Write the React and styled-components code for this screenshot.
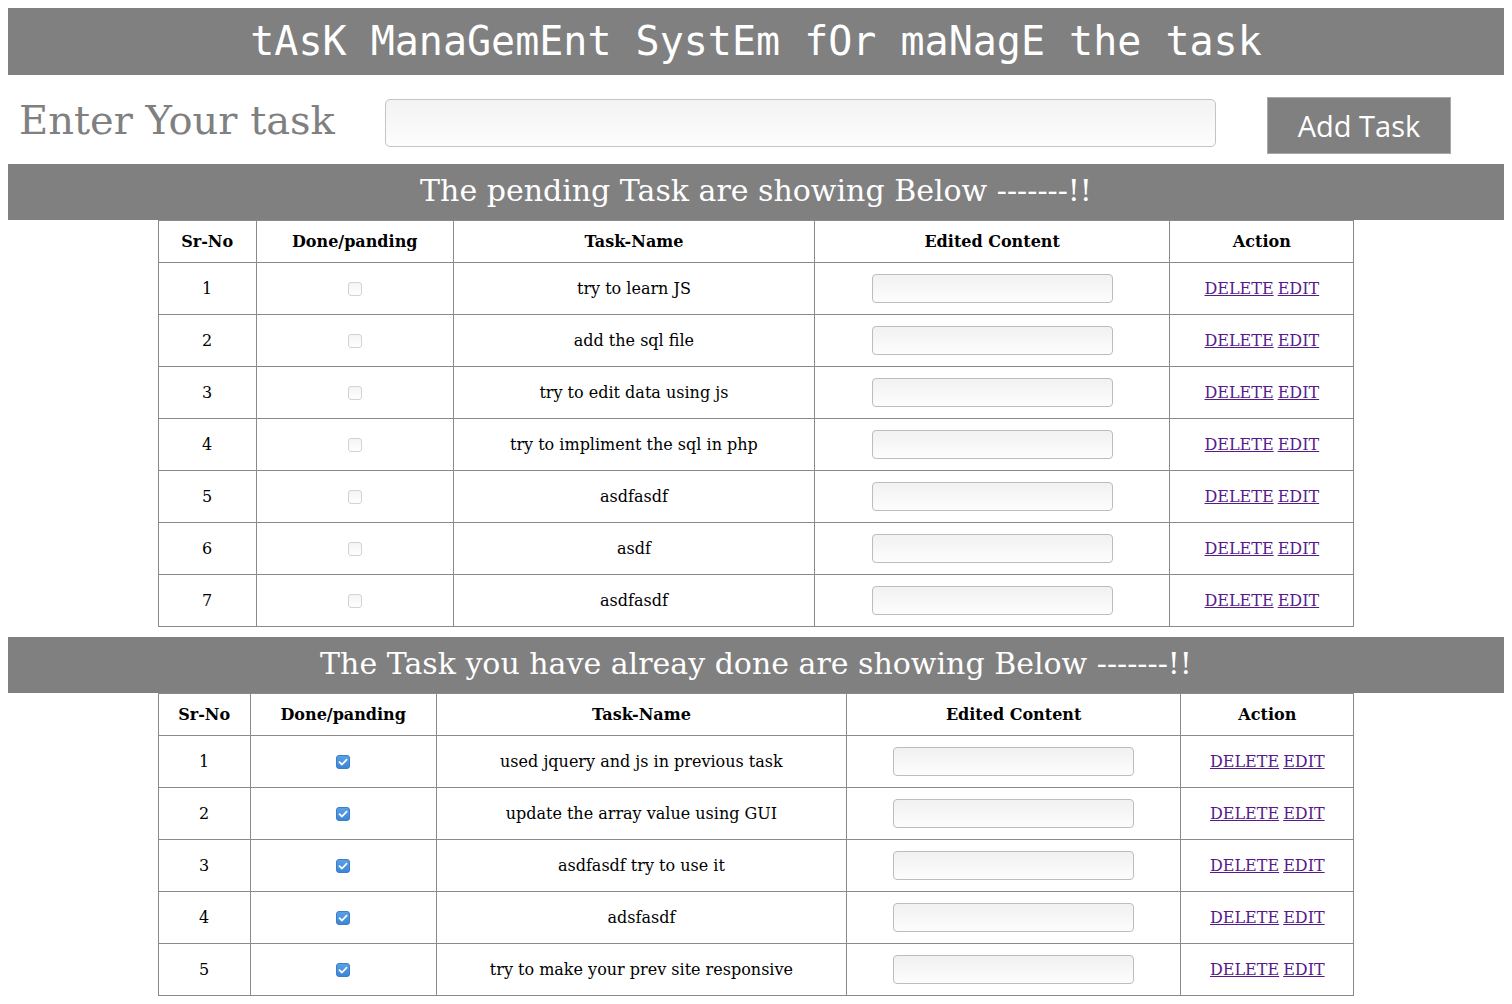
import React from "react";
import styled, { createGlobalStyle } from "styled-components";

const GlobalStyle = createGlobalStyle`
  body {
    margin: 8px;
    font-family: "DejaVu Serif", serif;
    background: #ffffff;
    color: #000;
  }
`;

const Banner = styled.h1`
  margin: 0;
  height: 67px;
  line-height: 67px;
  background: #808080;
  color: #ffffff;
  text-align: center;
  font-family: "DejaVu Sans Mono", monospace;
  font-size: 40px;
  font-weight: normal;
`;

const EntryRow = styled.div`
  display: flex;
  align-items: center;
  height: 89px;
  padding-left: 11px;
`;

const EntryLabel = styled.span`
  width: 366px;
  flex: none;
  font-size: 40px;
  color: #808080;
  margin-top: 1px;
`;

const EntryInput = styled.input`
  box-sizing: border-box;
  width: 831px;
  height: 48px;
  margin-top: 6px;
  border: 1px solid #c4c4c4;
  border-radius: 5px;
  background: linear-gradient(#f3f3f3, #fdfdfd);
  flex: none;
`;

const AddButton = styled.button`
  box-sizing: border-box;
  margin-left: 51px;
  margin-top: 12px;
  width: 184px;
  height: 57px;
  background: #808080;
  border: 1px solid #a8a8a8;
  color: #ffffff;
  font-family: "Open Sans", sans-serif;
  font-size: 29px;
  padding: 0;
`;

const SectionTitle = styled.h2`
  margin: ${(p) => p.$top}px 0 0;
  height: 56px;
  line-height: 54px;
  background: #808080;
  color: #ffffff;
  text-align: center;
  font-size: 30px;
  font-weight: normal;
`;

const Table = styled.table`
  width: 80%;
  margin: 0 auto;
  border-collapse: collapse;
  table-layout: fixed;
  border: 1px solid #8a8a8a;
  font-size: 16px;
`;

const Col = styled.col`
  width: ${(p) => p.$w}px;
`;

const Th = styled.th`
  border: 1px solid #8a8a8a;
  height: 41px;
  padding: 0;
  font-weight: bold;
  text-align: center;
`;

const Td = styled.td`
  border: 1px solid #8a8a8a;
  height: 51px;
  padding: 0;
  text-align: center;
  vertical-align: middle;
`;

const Check = styled.span`
  display: inline-block;
  box-sizing: border-box;
  width: 14px;
  height: 14px;
  border-radius: 3px;
  vertical-align: middle;
  border: 1px solid ${(p) => (p.$on ? "#3a7fc8" : "#d2d2d2")};
  background: ${(p) =>
    p.$on ? "linear-gradient(#5a9fe6, #3d86d6)" : "linear-gradient(#f4f4f4, #ffffff)"};
  position: relative;
  margin-top: -2px;
`;

const CellInput = styled.input`
  box-sizing: border-box;
  width: 241px;
  height: 29px;
  border: 1px solid #bdbdbd;
  border-radius: 4px;
  background: linear-gradient(#f1f1f1, #fdfdfd);
  vertical-align: middle;
`;

const ActionLink = styled.a`
  color: #551a8b;
  text-decoration: underline;
  margin: 0 2px;
`;

const pending = [
  "try to learn JS",
  "add the sql file",
  "try to edit data using js",
  "try to impliment the sql in php",
  "asdfasdf",
  "asdf",
  "asdfasdf",
];

const done = [
  "used jquery and js in previous task",
  "update the array value using GUI",
  "asdfasdf try to use it",
  "adsfasdf",
  "try to make your prev site responsive",
];

function CheckBox({ on }) {
  return (
    <Check $on={on}>
      {on && (
        <svg
          width="12"
          height="12"
          viewBox="0 0 12 12"
          style={{ position: "absolute", left: 0, top: 0 }}
        >
          <path
            d="M2.5 6.2 L5 8.5 L9.6 3.6"
            fill="none"
            stroke="#ffffff"
            strokeWidth="1.8"
            strokeLinecap="round"
            strokeLinejoin="round"
          />
        </svg>
      )}
    </Check>
  );
}

function TaskTable({ items, widths, on }) {
  return (
    <Table>
      <colgroup>
        {widths.map((w, i) => (
          <Col key={i} $w={w} />
        ))}
      </colgroup>
      <thead>
        <tr>
          <Th>Sr-No</Th>
          <Th>Done/panding</Th>
          <Th>Task-Name</Th>
          <Th>Edited Content</Th>
          <Th>Action</Th>
        </tr>
      </thead>
      <tbody>
        {items.map((t, i) => (
          <tr key={i}>
            <Td>{i + 1}</Td>
            <Td>
              <CheckBox on={on} />
            </Td>
            <Td>{t}</Td>
            <Td>
              <CellInput type="text" />
            </Td>
            <Td>
              <ActionLink href="#">DELETE</ActionLink>
              <ActionLink href="#">EDIT</ActionLink>
            </Td>
          </tr>
        ))}
      </tbody>
    </Table>
  );
}

export default function App() {
  return (
    <>
      <GlobalStyle />
      <Banner>tAsK ManaGemEnt SystEm fOr maNagE the task</Banner>
      <EntryRow>
        <EntryLabel>Enter Your task</EntryLabel>
        <EntryInput type="text" />
        <AddButton>Add Task</AddButton>
      </EntryRow>
      <SectionTitle $top={0}>The pending Task are showing Below -------!!</SectionTitle>
      <TaskTable items={pending} widths={[98, 197, 361, 355, 184]} on={false} />
      <SectionTitle $top={10}>The Task you have alreay done are showing Below -------!!</SectionTitle>
      <TaskTable items={done} widths={[92, 186, 410, 334, 173]} on={true} />
    </>
  );
}
